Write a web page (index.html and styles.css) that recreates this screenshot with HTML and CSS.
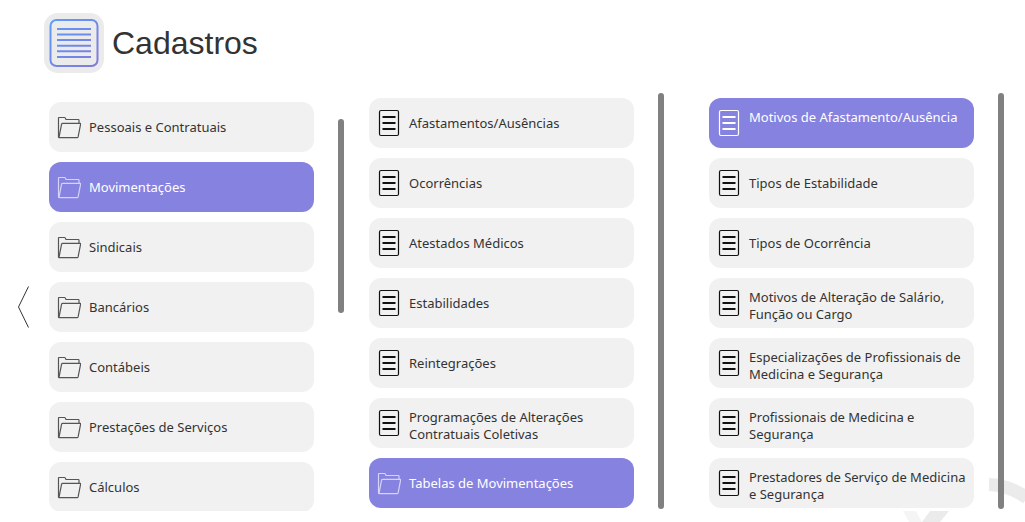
FILE: index.html
```html
<!DOCTYPE html>
<html lang="pt-BR">
<head>
  <meta charset="UTF-8" />
  <meta name="viewport" content="width=device-width, initial-scale=1.0" />
  <title>Cadastros</title>
  <link rel="stylesheet" href="styles.css">
</head>
<body>
  <!-- Shared icons -->
  <svg class="sprite" aria-hidden="true">
    <symbol id="folder" viewBox="0 0 24 28">
      <path d="M1.5 24.5V4.9q0-.4.4-.4H7.6q.5 0 .7.5l.7 1.5H21.3q.7 0 .7.7V10.2M2 24.3L4.6 11.1q.2-.8 1-.8H23q.8 0 .6.8L21.1 23.9q-.2.8-1 .8H2.3q-.8 0-.8-.8" fill="none" stroke="currentColor" stroke-width="1.2" stroke-linejoin="round" />
    </symbol>
    <symbol id="doc" viewBox="0 0 24 28">
      <rect x="2.5" y="1.5" width="19" height="25" rx="1.5" fill="none" stroke="currentColor" stroke-width="1.2" />
      <path d="M5.5 8H18.5M5.5 14H18.5M5.5 20H18.5" fill="none" stroke="currentColor" stroke-width="2" />
    </symbol>
  </svg>

  <svg class="watermark" viewBox="0 0 122 44" aria-hidden="true">
    <path d="M0 33H13L19 44H6Z" fill="#f5f5f5" />
    <path d="M27 33H46L37 44H19Z" fill="#ebebeb" />
    <path d="M86 6.5Q106 7 124 20" fill="none" stroke="#ebebeb" stroke-width="13" />
  </svg>

  <header class="header">
    <svg class="logo" viewBox="0 0 60 60" aria-hidden="true">
      <defs>
        <linearGradient id="grad" gradientUnits="userSpaceOnUse" x1="6" y1="6" x2="54" y2="54">
          <stop offset="0" stop-color="#5a9cff" />
          <stop offset="1" stop-color="#8478d8" />
        </linearGradient>
      </defs>
      <rect width="60" height="60" rx="14" fill="#ebebeb" />
      <g fill="none" stroke="url(#grad)" stroke-width="2">
        <rect x="6.5" y="7" width="47" height="46" rx="6" />
        <path d="M13 16H47M13 21.5H47M13 27H47M13 32.7H47M13 38.3H47M13 44H47" />
      </g>
    </svg>
    <h1>Cadastros</h1>
  </header>

  <main class="menu">
    <button class="back" aria-label="Voltar">
      <svg viewBox="0 0 13 42" aria-hidden="true"><path d="M11.5 .5L1.5 21L11.5 41.5" fill="none" stroke="#333" /></svg>
    </button>

    <section class="column first">
      <ul class="list">
        <li><button class="item folder"><svg><use href="#folder" /></svg><span>Pessoais e Contratuais</span></button></li>
        <li><button class="item folder active"><svg><use href="#folder" /></svg><span>Movimentações</span></button></li>
        <li><button class="item folder"><svg><use href="#folder" /></svg><span>Sindicais</span></button></li>
        <li><button class="item folder"><svg><use href="#folder" /></svg><span>Bancários</span></button></li>
        <li><button class="item folder"><svg><use href="#folder" /></svg><span>Contábeis</span></button></li>
        <li><button class="item folder"><svg><use href="#folder" /></svg><span>Prestações de Serviços</span></button></li>
        <li><button class="item folder"><svg><use href="#folder" /></svg><span>Cálculos</span></button></li>
      </ul>
      <div class="scrollbar"></div>
    </section>

    <section class="column">
      <ul class="list">
        <li><button class="item"><svg><use href="#doc" /></svg><span>Afastamentos/Ausências</span></button></li>
        <li><button class="item"><svg><use href="#doc" /></svg><span>Ocorrências</span></button></li>
        <li><button class="item"><svg><use href="#doc" /></svg><span>Atestados Médicos</span></button></li>
        <li><button class="item"><svg><use href="#doc" /></svg><span>Estabilidades</span></button></li>
        <li><button class="item"><svg><use href="#doc" /></svg><span>Reintegrações</span></button></li>
        <li><button class="item long"><svg><use href="#doc" /></svg><span>Programações de Alterações Contratuais Coletivas</span></button></li>
        <li><button class="item folder active"><svg><use href="#folder" /></svg><span>Tabelas de Movimentações</span></button></li>
      </ul>
      <div class="scrollbar"></div>
    </section>

    <section class="column last">
      <ul class="list">
        <li><button class="item long active"><svg><use href="#doc" /></svg><span>Motivos de Afastamento/Ausência</span></button></li>
        <li><button class="item"><svg><use href="#doc" /></svg><span>Tipos de Estabilidade</span></button></li>
        <li><button class="item"><svg><use href="#doc" /></svg><span>Tipos de Ocorrência</span></button></li>
        <li><button class="item long"><svg><use href="#doc" /></svg><span>Motivos de Alteração de Salário, Função ou Cargo</span></button></li>
        <li><button class="item long"><svg><use href="#doc" /></svg><span>Especializações de Profissionais de Medicina e Segurança</span></button></li>
        <li><button class="item long"><svg><use href="#doc" /></svg><span>Profissionais de Medicina e Segurança</span></button></li>
        <li><button class="item long"><svg><use href="#doc" /></svg><span>Prestadores de Serviço de Medicina e Segurança</span></button></li>
      </ul>
      <div class="scrollbar"></div>
    </section>
  </main>
</body>
</html>
```

FILE: styles.css
```css
/* Global Styles */
* {
  margin: 0;
  padding: 0;
  box-sizing: border-box;
}

body {
  display: flex;
  flex-direction: column;
  height: 100vh;
  padding-bottom: 11px;
  overflow: hidden;
  background: #fff;
  color: #333;
  font-family: Tahoma, 'Noto Sans', sans-serif;
  font-size: 13px;
  line-height: 17px;
}

button {
  border: none;
  background: none;
  color: inherit;
  font: inherit;
  cursor: pointer;
}

.sprite {
  position: absolute;
  width: 0;
  height: 0;
}

.watermark {
  position: absolute;
  right: 0;
  bottom: 0;
  z-index: -1;
  width: 122px;
  height: 44px;
}

/* Header */
.header {
  display: flex;
  align-items: center;
  gap: 8px;
  padding: 13px 44px 20px;
}

.header h1 {
  font-family: Arial, 'Liberation Sans', sans-serif;
  font-size: 32px;
  font-weight: 400;
  line-height: 36px;
}

.logo {
  width: 60px;
  height: 60px;
}

/* Menu columns */
.menu {
  display: flex;
  flex: 1;
  min-height: 0;
  padding-left: 17px;
}

.back {
  align-self: center;
  width: 13px;
  height: 42px;
  margin: 9px 19px 0 0;
}

.back svg {
  display: block;
  width: 13px;
  height: 42px;
}

.column {
  display: flex;
  flex: 0 1 295px;
  margin-right: 45px;
}

.column.first {
  margin-right: 25px;
}

.list {
  flex: 1;
  margin-right: 9px;
  padding: 5px 15px 0 0;
  overflow: hidden;
  background: #fff;
  list-style: none;
}

.first .list {
  padding-top: 9px;
}

.column.last {
  margin-right: 0;
}

.scrollbar {
  flex: none;
  width: 6px;
  margin-bottom: 2px;
  border-radius: 3px;
  background: #808080;
}

.first .scrollbar {
  height: 194px;
  margin-top: 26px;
}

/* Menu items */
.item {
  display: flex;
  align-items: center;
  gap: 8px;
  width: 100%;
  height: 50px;
  margin-bottom: 10px;
  padding: 0 4px 0 8px;
  border-radius: 12px;
  background: #f1f1f1;
  text-align: left;
}

.item svg {
  flex: none;
  width: 24px;
  height: 28px;
  color: #111;
}

.item.folder svg {
  color: #555;
}

.item.long span {
  align-self: flex-start;
  padding-top: 11px;
}

.item.active {
  background: #8682e0;
  color: #fff;
}

.item.active svg {
  color: #fff;
}

.item.folder.active svg {
  color: #d5d3f6;
}
```
